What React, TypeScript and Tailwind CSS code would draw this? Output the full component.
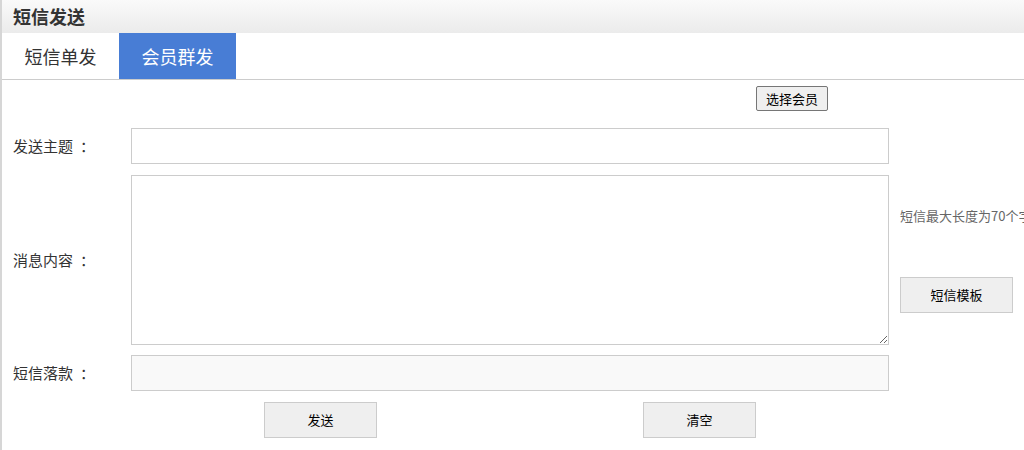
function Label({ text }: { text: string }) {
  return (
    <div className="flex w-[129px] shrink-0 items-center whitespace-nowrap pl-[11px] text-[15px] text-[#333]">
      {text}
      <span className="ml-[7px]">：</span>
    </div>
  );
}

export default function App() {
  return (
    <div
      className="h-[450px] w-[1024px] overflow-hidden border-l-2 border-[#d6d6d6] bg-white text-[#333]"
      style={{ fontFamily: '"Noto Sans CJK SC", "Noto Sans", sans-serif' }}
    >
      {/* Title bar */}
      <div className="flex h-[33px] items-center bg-gradient-to-b from-[#fafafa] to-[#ebebeb] pl-[11px] text-[18px] font-bold text-[#333]">
        短信发送
      </div>

      {/* Tabs */}
      <div className="flex h-[47px] border-b border-[#cccccc]">
        <div className="flex w-[117px] items-center justify-center text-[18px] text-[#333]">
          短信单发
        </div>
        <div className="flex w-[117px] items-center justify-center bg-[#487dd5] text-[18px] text-white">
          会员群发
        </div>
      </div>

      {/* Form */}
      <div className="overflow-hidden pt-[6px]">
        <div className="flex h-[25px]">
          <button className="ml-[754px] h-[25px] w-[72px] rounded-[2px] border border-[#767676] bg-[#efefef] text-[13px] leading-none text-black">
            选择会员
          </button>
        </div>

        <div className="mt-[17px] flex items-center">
          <Label text="发送主题" />
          <input className="h-[36px] w-[758px] shrink-0 border border-[#cccccc] px-2 text-[14px] outline-none" />
        </div>

        <div className="mt-[11px] flex">
          <Label text="消息内容" />
          <textarea className="h-[170px] w-[758px] shrink-0 border border-[#cccccc] px-2 text-[14px] outline-none" />
          <div className="ml-[11px] flex shrink-0 flex-col whitespace-nowrap">
            <div className="mt-[31px] text-[13px] text-[#666]">短信最大长度为70个字</div>
            <button className="mt-[51px] h-[36px] w-[113px] border border-[#cccccc] bg-[#efefef] text-[13px] text-black">
              短信模板
            </button>
          </div>
        </div>

        <div className="mt-[10px] flex items-center">
          <Label text="短信落款" />
          <input className="h-[36px] w-[758px] shrink-0 border border-[#cccccc] bg-[#f9f9f9] px-2 text-[14px] outline-none" />
        </div>

        <div className="mt-[11px] flex">
          <div className="w-[129px] shrink-0" />
          <div className="grid w-[758px] shrink-0 grid-cols-2">
            <div className="flex justify-center">
              <button className="h-[36px] w-[113px] border border-[#cccccc] bg-[#efefef] text-[13px] text-black">
                发送
              </button>
            </div>
            <div className="flex justify-center">
              <button className="h-[36px] w-[113px] border border-[#cccccc] bg-[#efefef] text-[13px] text-black">
                清空
              </button>
            </div>
          </div>
        </div>
      </div>
    </div>
  );
}
